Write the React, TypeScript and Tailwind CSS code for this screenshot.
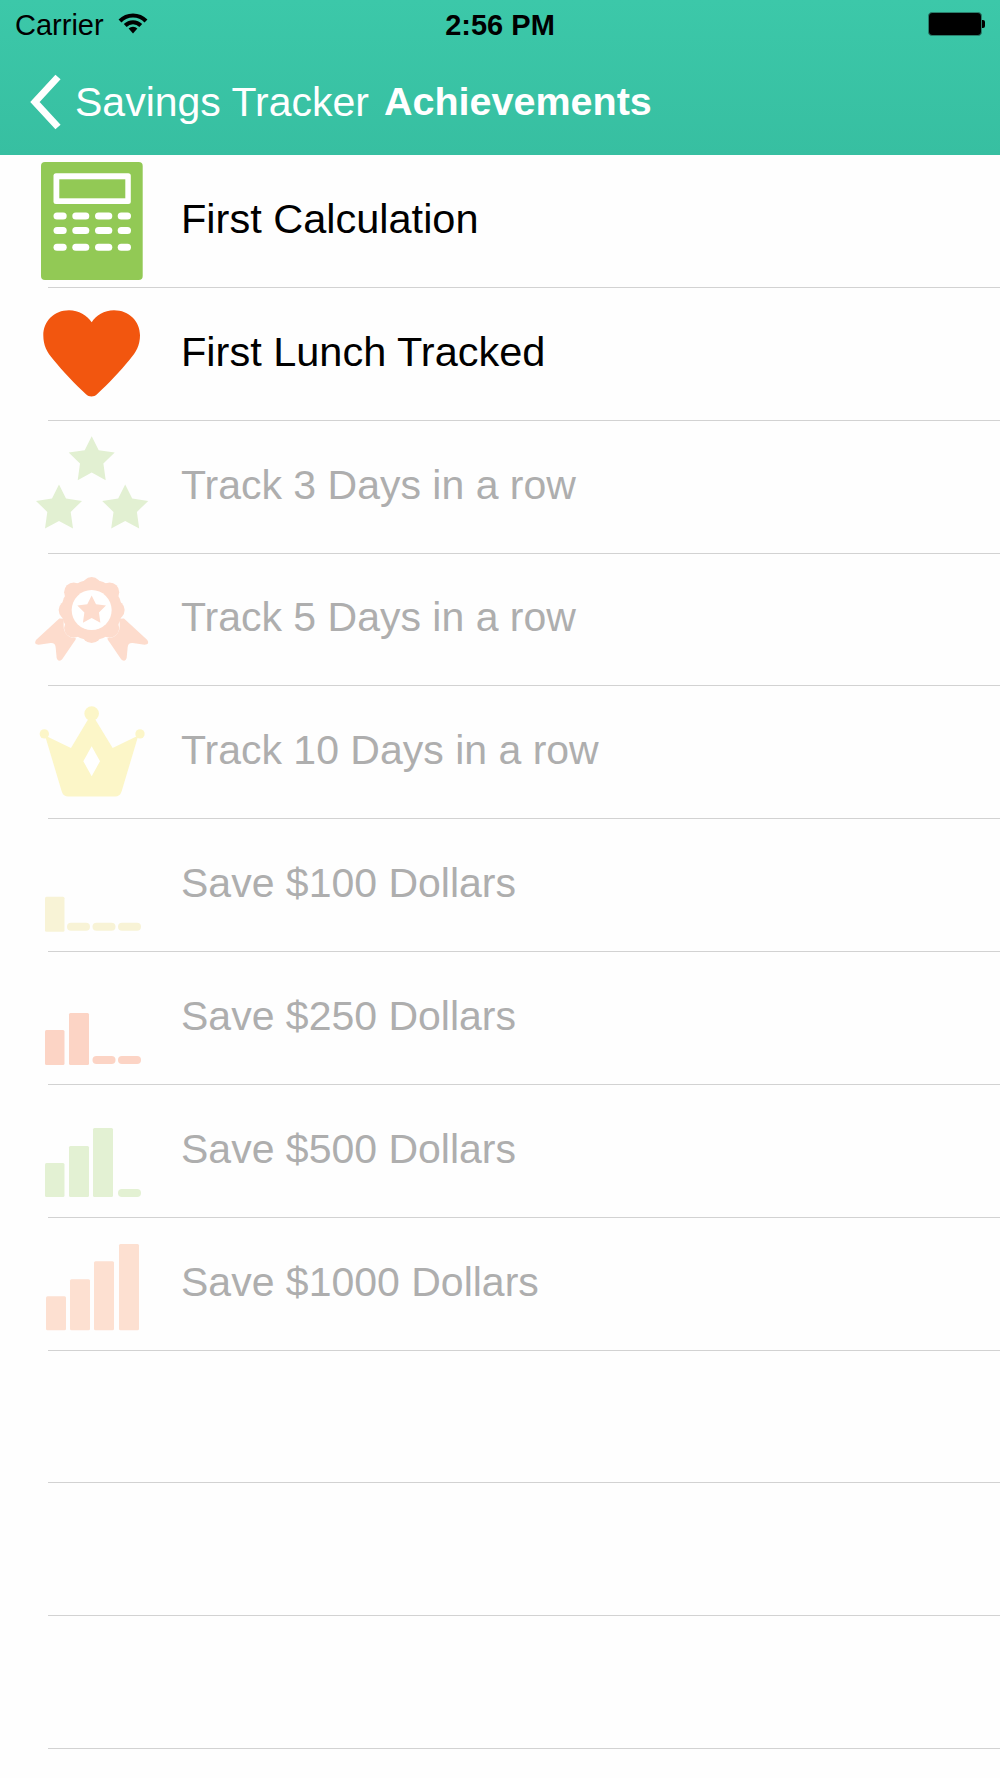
import React from "react";

const ROW_H = 132.85;
const TOP = 155;

const starPts = (x: number, y: number, s = 1) =>
  [
    [0, 0],
    [7, 14],
    [23, 16.3],
    [11.7, 27.3],
    [14, 44],
    [0, 36.3],
    [-14, 44],
    [-11.7, 27.3],
    [-23, 16.3],
    [-7, 14],
  ]
    .map(([a, b]) => `${x + a * s},${y + b * s}`)
    .join(" ");

const Calculator = () => {
  const xs = [
    [53.5, 13.2],
    [72.3, 17],
    [95, 17.3],
    [117.7, 13.3],
  ];
  const ys = [212.4, 227, 243.8];
  return (
    <>
      <rect x="41" y="162" width="101.7" height="118" rx="4" fill="#92c955" />
      <rect x="53.5" y="173.3" width="77.3" height="30.7" rx="2.5" fill="#fff" />
      <rect x="59.3" y="179.3" width="66" height="19" fill="#92c955" />
      {ys.map((y) =>
        xs.map(([x, w]) => <rect key={`${x}-${y}`} x={x} y={y} width={w} height="7" rx="3.5" fill="#fff" />)
      )}
    </>
  );
};

const Heart = () => (
  <path
    fill="#f2560f"
    d="M91.7 322C96 315 104 310 114 310C129 310 140 321 140 335C140 345 136 352 130 359C120 371 108 384 97 394C94 397 89 397 86 394C75 384 63 371 53 359C47 352 43.3 345 43.3 335C43.3 321 54 310 69 310C79 310 87 315 91.7 322Z"
  />
);

const Stars = () => (
  <g fill="#e2f0d2">
    <polygon points={starPts(91.7, 436)} />
    <polygon points={starPts(59, 484.3)} />
    <polygon points={starPts(125.2, 484.3)} />
  </g>
);

const ribbon = "M118 597L48 662Q40 676 56 676L92 671Q106 670 107 684L110 716Q114 730 126 720L167 660L170 600Z";
// eight lobes round the rosette, the diagonal ones sit a little further out
const lobes = [0, 45, 90, 135, 180, 225, 270, 315].map((deg) => {
  const r = deg % 90 === 0 ? 70 : 76;
  const a = (deg * Math.PI) / 180;
  return { x: 215 + r * Math.cos(a), y: 572 + r * Math.sin(a), deg };
});

const Badge = () => (
  <g transform="translate(20 420) scale(0.3333)" fill="#fddccd">
    <path d={ribbon} />
    <path d={ribbon} transform="translate(430 0) scale(-1 1)" />
    <rect x="139" y="496" width="152" height="152" rx="26" fill="#fff" stroke="#fff" strokeWidth="16" />
    <circle cx="215" cy="572" r="91" />
    {lobes.map((l) => (
      <circle key={l.deg} cx={l.x} cy={l.y} r="29" />
    ))}
    <circle cx="215" cy="572" r="60" fill="#fff" />
    <polygon points={starPts(215, 528, 1.87)} />
  </g>
);

const Crown = () => (
  <g transform="translate(20 420) scale(0.3333)" fill="#fcf6c8">
    <circle cx="215" cy="882" r="22" />
    <circle cx="73" cy="943" r="14" />
    <circle cx="360" cy="943" r="14" />
    <path d="M205 898L225 898L278 985L355 948L305 1115Q300 1131 285 1131L145 1131Q130 1131 125 1115L75 948L153 985Z" />
    <polygon points="215,980 240,1025 215,1070 190,1025" fill="#fff" />
  </g>
);

type Bar = [number, number, number, number];

const Bars = ({ color, bars, pills = [] }: { color: string; bars: Bar[]; pills?: Bar[] }) => (
  <g fill={color}>
    {bars.map(([x, y, w, h]) => (
      <rect key={x} x={x} y={y} width={w} height={h} rx="1.5" />
    ))}
    {pills.map(([x, y, w, h]) => (
      <rect key={x} x={x} y={y} width={w} height={h} rx="4" />
    ))}
  </g>
);

const rows: { label: string; done?: boolean; icon: React.ReactNode }[] = [
  { label: "First Calculation", done: true, icon: <Calculator /> },
  { label: "First Lunch Tracked", done: true, icon: <Heart /> },
  { label: "Track 3 Days in a row", icon: <Stars /> },
  { label: "Track 5 Days in a row", icon: <Badge /> },
  { label: "Track 10 Days in a row", icon: <Crown /> },
  {
    label: "Save $100 Dollars",
    icon: (
      <Bars
        color="#f8f3d6"
        bars={[[45, 897, 19.5, 35]]}
        pills={[
          [67, 923, 23, 8],
          [92.5, 923, 23, 8],
          [118, 923, 23, 8],
        ]}
      />
    ),
  },
  {
    label: "Save $250 Dollars",
    icon: (
      <Bars
        color="#fcd4c5"
        bars={[
          [45, 1030, 19.5, 35],
          [69, 1013, 20, 52],
        ]}
        pills={[
          [92.5, 1056, 23, 8],
          [118, 1056, 23, 8],
        ]}
      />
    ),
  },
  {
    label: "Save $500 Dollars",
    icon: (
      <Bars
        color="#e3f1d3"
        bars={[
          [45, 1163, 19.5, 34],
          [69, 1146, 20, 51],
          [93, 1128, 20, 69],
        ]}
        pills={[[118, 1189, 23, 8]]}
      />
    ),
  },
  {
    label: "Save $1000 Dollars",
    icon: (
      <Bars
        color="#fde0d1"
        bars={[
          [46, 1296, 20, 34],
          [70, 1279, 20, 51],
          [94, 1261, 20, 69],
          [119, 1243.7, 20, 86.3],
        ]}
      />
    ),
  },
  { label: "", icon: null },
  { label: "", icon: null },
  { label: "", icon: null },
];

export default function App() {
  return (
    <div className="h-[1778px] w-full overflow-hidden bg-[#fefefe] font-['Liberation_Sans',sans-serif]">
      <header className="h-[155px] bg-gradient-to-b from-[#3cc8a9] to-[#37bfa1]">
        {/* status bar */}
        <div className="grid h-[47px] grid-cols-3 items-center px-[15px] text-[29px] text-black">
          <div className="flex items-center gap-[14px] pt-[4px]">
            <span>Carrier</span>
            <svg width="30" height="22" viewBox="0 0 30 22" className="-mt-[5px]">
              <path d="M2 9A18 18 0 0 1 28 9" fill="none" stroke="#000" strokeWidth="4" />
              <path d="M7.2 13.5A11 11 0 0 1 22.8 13.5" fill="none" stroke="#000" strokeWidth="4" />
              <path d="M15 21.5L10.6 16.5A6.2 6.2 0 0 1 19.4 16.5Z" fill="#000" />
            </svg>
          </div>
          <div className="pt-[4px] text-center font-bold">2:56 PM</div>
          <div className="flex items-center justify-end">
            <div className="h-[24px] w-[54px] rounded-[4px] border border-[#2a7f6c] bg-black" />
            <div className="h-[8px] w-[3px] rounded-r-[2px] bg-black" />
          </div>
        </div>
        {/* nav bar */}
        <div className="flex h-[108px] items-center pt-[2px] text-white">
          <svg width="34" height="56" viewBox="0 0 34 56" className="ml-[28px] shrink-0">
            <polyline points="30,3 7,28 30,53" fill="none" stroke="#fff" strokeWidth="7" />
          </svg>
          <span className="ml-[13px] text-[41px] leading-none">Savings Tracker</span>
          <span className="ml-[15px] text-[39.5px] font-bold leading-none">Achievements</span>
        </div>
      </header>
      <div>
        {rows.map((row, i) => (
          <div key={i}>
            <div className="flex h-[131.85px] items-center pl-[32px]">
              {row.icon ? (
                <svg
                  width="120"
                  height="132"
                  viewBox={`32 ${TOP + i * ROW_H} 120 132`}
                  className="shrink-0"
                >
                  {row.icon}
                </svg>
              ) : null}
              {row.label ? (
                <span
                  className={`ml-[29px] leading-none ${
                    row.done ? "-mt-[5px] text-[41.5px] text-black" : "-mt-[3px] text-[41px] text-[#aeaeae]"
                  }`}
                >
                  {row.label}
                </span>
              ) : null}
            </div>
            <div className="ml-[48px] h-px bg-[#d2d2d2]" />
          </div>
        ))}
      </div>
    </div>
  );
}
